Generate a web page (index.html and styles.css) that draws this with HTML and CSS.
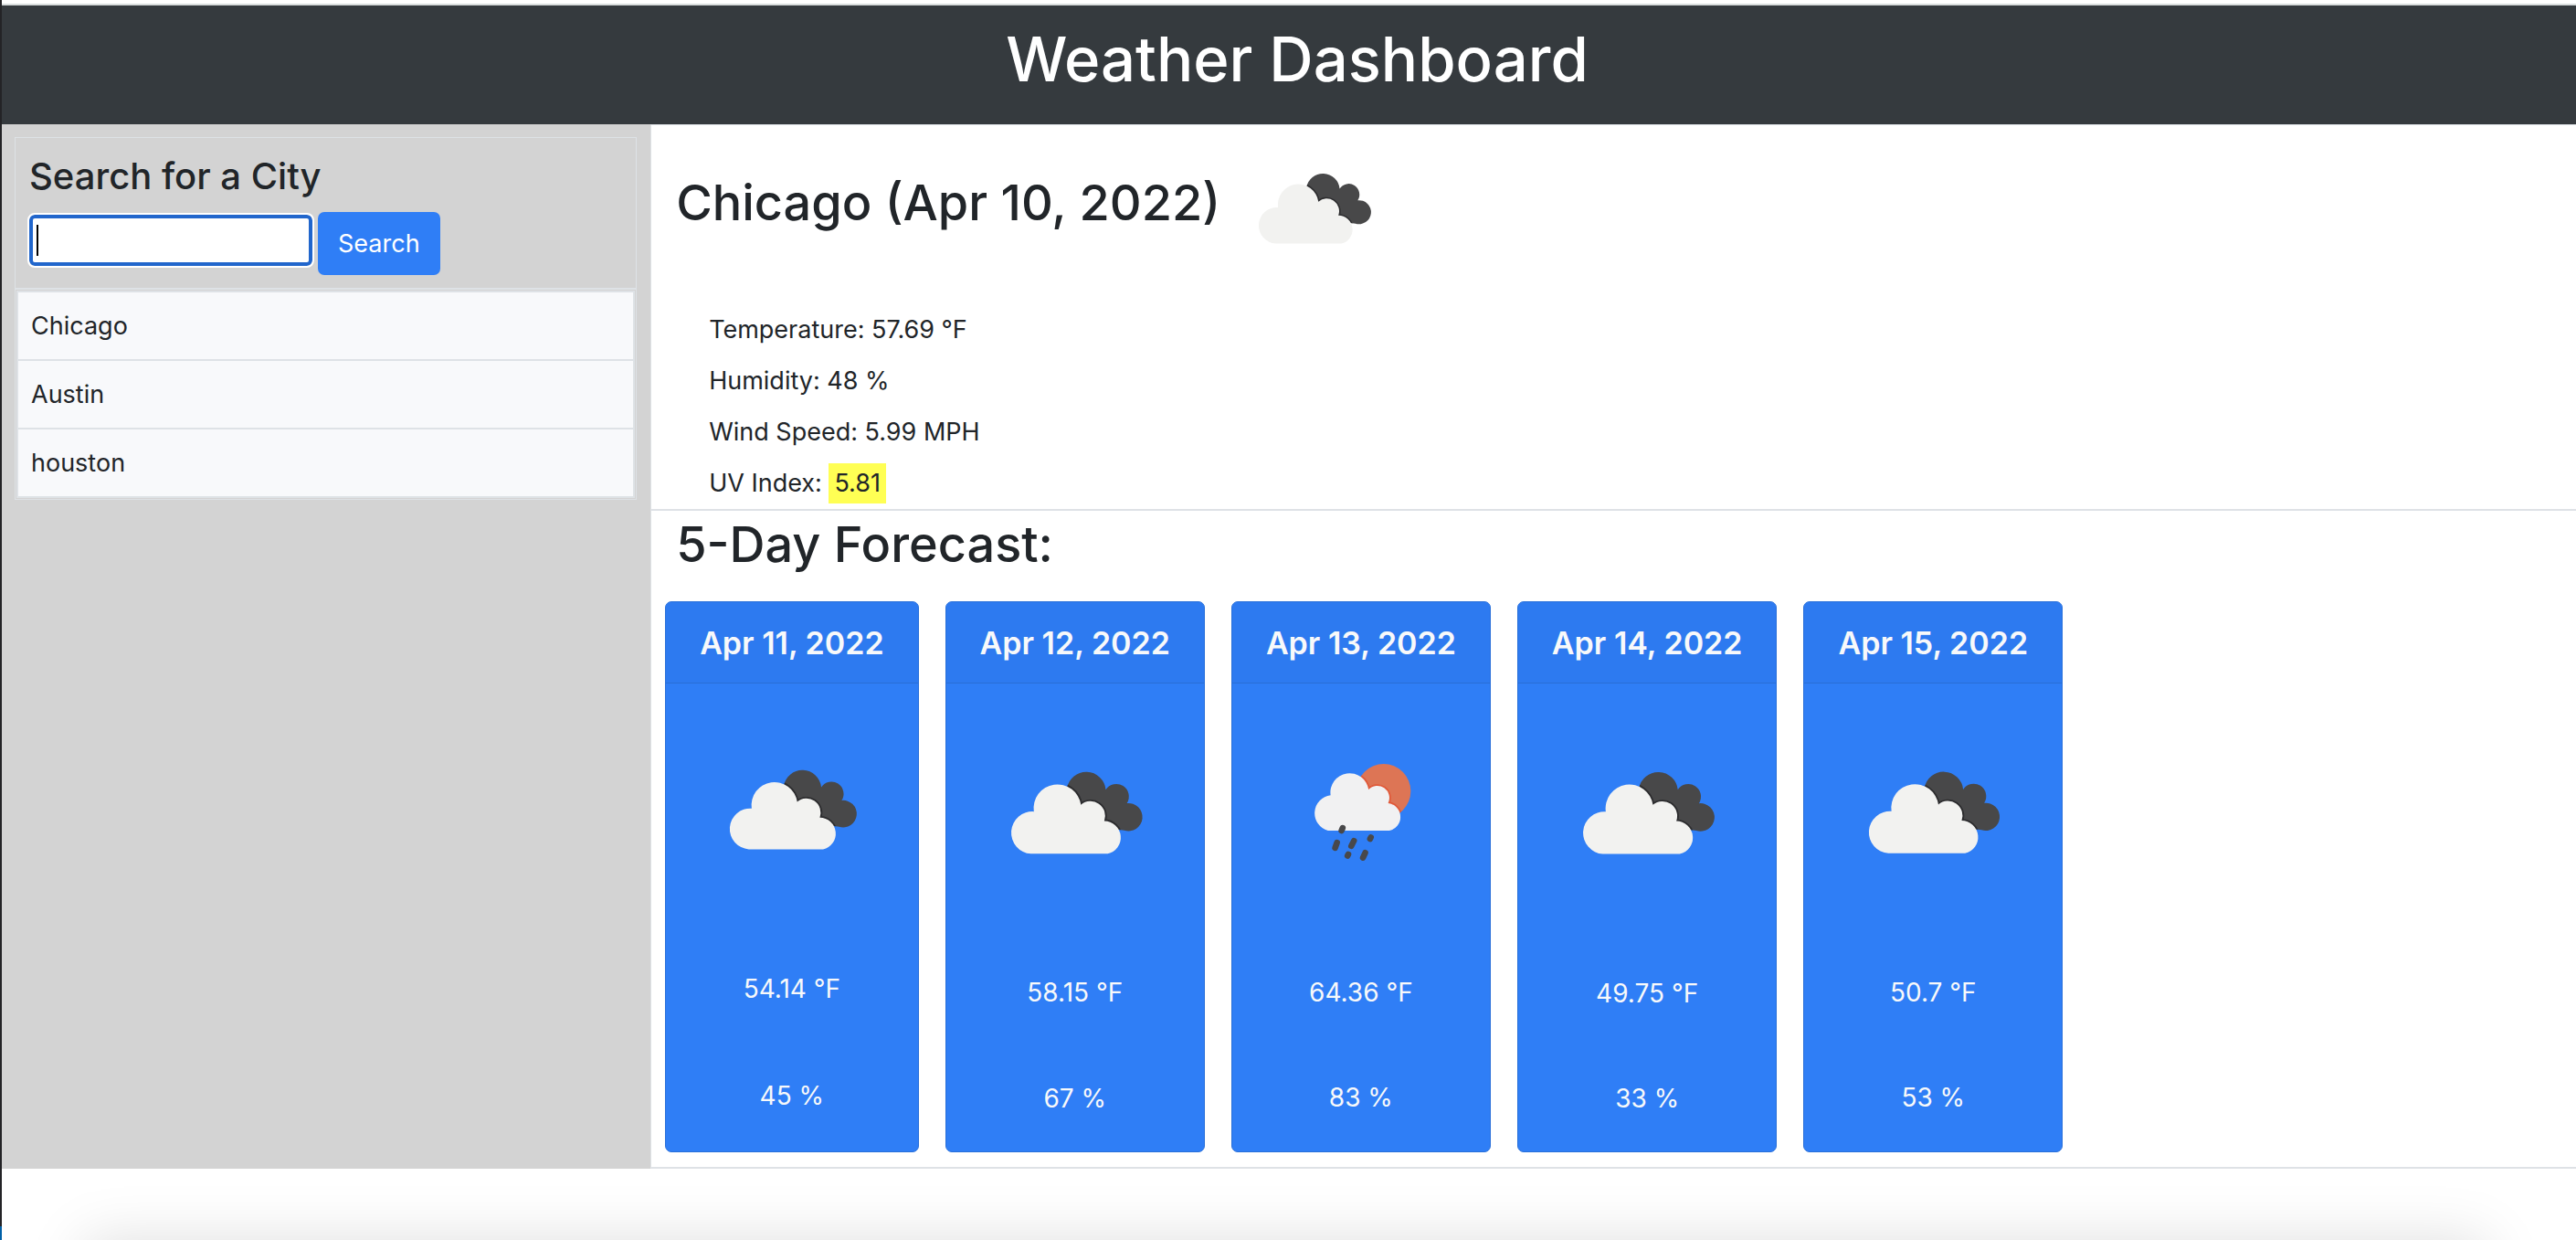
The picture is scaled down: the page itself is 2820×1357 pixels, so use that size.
FILE: index.html
```html
<!DOCTYPE html>
<html lang="en">
<head>
<meta charset="utf-8">
<title>Weather Dashboard</title>
<link rel="stylesheet" href="styles.css">
</head>
<body>
<svg class="sprite" aria-hidden="true">
  <symbol id="clouds" viewBox="887 352 510 510">
    <clipPath id="dark-clip"><path d="M1120 545A52 52 0 0 1 1223 549A32 32 0 0 1 1279 585A37 37 0 1 1 1272 657L1150 640Z"/></clipPath>
    <path fill="#484849" d="M1120 545A52 52 0 0 1 1223 549A32 32 0 0 1 1279 585A37 37 0 1 1 1272 657L1150 640Z"/>
    <path clip-path="url(#dark-clip)" fill="none" stroke="#2c2c2e" stroke-width="9" d="M1024 719A56 56 0 0 1 1032 607A63 63 0 0 1 1157 589A39 39 0 0 1 1219 632A44 44 0 0 1 1228 719Z"/>
    <path fill="#f2f2f0" d="M1024 719A56 56 0 0 1 1032 607A63 63 0 0 1 1157 589A39 39 0 0 1 1219 632A44 44 0 0 1 1228 719Z"/>
  </symbol>
  <symbol id="rain" viewBox="133 352 510 510">
    <clipPath id="sun-clip"><circle cx="448" cy="553" r="72"/></clipPath>
    <circle cx="448" cy="553" r="72" fill="#dd7555"/>
    <path clip-path="url(#sun-clip)" fill="none" stroke="#e05a3a" stroke-width="9" d="M300 658A48 48 0 0 1 307 564A51 51 0 0 1 408 549A32 32 0 0 1 460 585A37 37 0 0 1 463 658Z"/>
    <path fill="#f1f1f2" d="M300 658A48 48 0 0 1 307 564A51 51 0 0 1 408 549A32 32 0 0 1 460 585A37 37 0 0 1 463 658Z"/>
    <path fill="none" stroke="#48484a" stroke-width="16" stroke-linecap="round" d="M339 651L336 658M324 690L319 704M369 685L362 699M414 676L412 680M354 721L352 725M399 717L393 730"/>
  </symbol>
</svg>
<div class="page">
  <header class="banner"><h1>Weather Dashboard</h1></header>
  <div class="columns">
    <aside class="sidebar">
      <div class="panel">
        <form class="search">
          <h3><label for="city">Search for a City</label></h3>
          <div class="search-row">
            <input id="city" type="text" autocomplete="off">
            <button type="button">Search</button>
          </div>
        </form>
        <ul class="history">
          <li>Chicago</li>
          <li>Austin</li>
          <li>houston</li>
        </ul>
      </div>
    </aside>
    <main class="content">
      <section class="current">
        <div class="current-title">
          <h2>Chicago (Apr 10, 2022)</h2>
          <svg class="current-icon" role="img" aria-label="Broken clouds"><use href="#clouds"/></svg>
        </div>
        <ul class="readings">
          <li>Temperature: 57.69 °F</li>
          <li>Humidity: 48 %</li>
          <li>Wind Speed: 5.99 MPH</li>
          <li>UV Index: <span class="uv">5.81</span></li>
        </ul>
      </section>
      <section class="forecast">
        <h2>5-Day Forecast:</h2>
        <div class="cards">
          <article class="card"><h5>Apr 11, 2022</h5><div class="cell"><svg role="img" aria-label="Broken clouds"><use href="#clouds"/></svg></div><p class="cell">54.14 °F</p><p class="cell">45 %</p></article>
          <article class="card"><h5>Apr 12, 2022</h5><div class="cell"><svg role="img" aria-label="Broken clouds"><use href="#clouds"/></svg></div><p class="cell">58.15 °F</p><p class="cell">67 %</p></article>
          <article class="card"><h5>Apr 13, 2022</h5><div class="cell"><svg role="img" aria-label="Rain"><use href="#rain"/></svg></div><p class="cell">64.36 °F</p><p class="cell">83 %</p></article>
          <article class="card"><h5>Apr 14, 2022</h5><div class="cell"><svg role="img" aria-label="Broken clouds"><use href="#clouds"/></svg></div><p class="cell">49.75 °F</p><p class="cell">33 %</p></article>
          <article class="card"><h5>Apr 15, 2022</h5><div class="cell"><svg role="img" aria-label="Broken clouds"><use href="#clouds"/></svg></div><p class="cell">50.7 °F</p><p class="cell">53 %</p></article>
        </div>
      </section>
    </main>
  </div>
  <footer class="foot"></footer>
</div>
</body>
</html>
```
FILE: styles.css
```css
* { box-sizing: border-box; }
body {
  margin: 0;
  font-family: Inter, "Liberation Sans", sans-serif;
  font-size: 27px;
  line-height: 44px;
  color: #212529;
  background: #fff;
}
h1, h2, h3, h5, p, ul { margin: 0; padding: 0; font-weight: 500; }
p, li { font-weight: 400; }
ul { list-style: none; }
.sprite { position: absolute; width: 0; height: 0; }
.page {
  display: flex;
  flex-direction: column;
  min-height: 100vh;
  padding: 4px 0 0 2px;
  background: linear-gradient(to top, #0060a8 15px, #232326 15px) left / 2px 100% no-repeat;
}
.banner {
  border-top: 2px solid #d9dddd;
  background: #353a3e;
  color: #fff;
  text-align: center;
  padding: 15px 0 27px 18px;
}
.banner h1 { font-size: 67px; line-height: 88px; }
.columns {
  display: grid;
  grid-template-columns: minmax(0, 252fr) minmax(0, 748fr);
}
.sidebar { background: #d3d3d3; padding: 14px 15px 14px 14px; }
.panel { border: 1px solid #dee2e6; }
.search { border-bottom: 2px solid #dee2e6; padding: 17px 15px 14px; }
.search h3 { font-size: 40px; line-height: 50px; margin-bottom: 14px; }
.search-row { display: flex; gap: 6px; }
.search-row input {
  width: 310px;
  height: 56px;
  margin-top: 3px;
  border: 4px solid #2166cc;
  border-radius: 6px;
  outline: 2px solid #fff;
  font: inherit;
  background: linear-gradient(#000, #000) 4px center / 2px 34px no-repeat #fff;
}
.search-row button {
  height: 69px;
  padding: 0 22px;
  border: 0;
  border-radius: 7px;
  background: #2f7ef6;
  color: #fff;
  font: inherit;
}
.history { margin: 1px; border: 2px solid #dee2e6; }
.history li { background: #f8f9fb; padding: 15px 14px 14px; }
.history li + li { border-top: 2px solid #dee2e6; }
.content { border: 1px solid #dee2e6; border-width: 1px 0 2px 1px; }
.current { border-bottom: 2px solid #dee2e6; padding: 0 27px 6px; }
.current-title { display: flex; align-items: center; gap: 12px; }
.current h2, .forecast h2 { font-size: 54px; line-height: 68px; }
.current h2 { padding-bottom: 11px; }
.current-icon { width: 180px; height: 180px; }
.readings { display: grid; gap: 12px; padding: 22px 0 0 36px; }
.uv { display: inline-block; padding: 0 6px; background: #ffff54; }
.forecast { padding: 3px 15px 16px; }
.forecast h2 { padding-left: 12px; margin-bottom: 28px; }
.cards { display: flex; gap: 29px; }
.card {
  display: flex;
  flex-direction: column;
  border: 1px solid #286fd9;
  border-radius: 7px;
  background: #2f7ef6;
  color: #f8f9fa;
  text-align: center;
}
.card h5 {
  padding: 23px 37px 21px;
  border-bottom: 1px solid #296fd6;
  border-radius: 6px 6px 0 0;
  background: #2d7af0;
  font-size: 34px;
  font-weight: 600;
}
.cell { flex: 1 1 auto; padding: 35px 36px 36px; font-size: 28px; }
.cell svg { display: block; width: 0; min-width: 100%; height: auto; aspect-ratio: 1; }
.foot { position: relative; flex: 1 0 78px; overflow: hidden; }
.foot::after {
  content: "";
  position: absolute;
  top: 100%;
  left: 90px;
  right: 98px;
  height: 200px;
  box-shadow: 0 0 60px rgba(0, 0, 0, .13);
}
```
